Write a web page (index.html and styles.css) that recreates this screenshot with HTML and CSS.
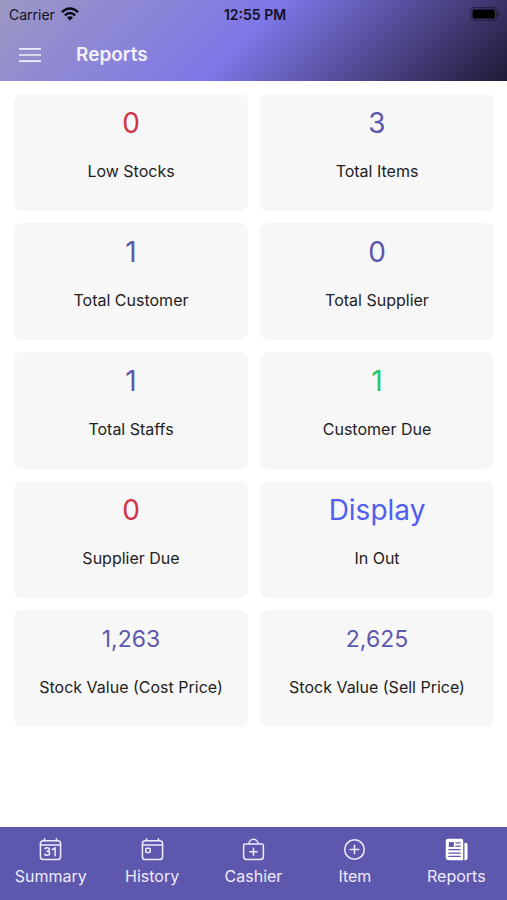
FILE: index.html
```
<!DOCTYPE html>
<html lang="en">
<head>
<meta charset="utf-8">
<meta name="viewport" content="width=device-width, initial-scale=1">
<title>Reports</title>
<link rel="stylesheet" href="styles.css">
</head>
<body>
<header class="header">
  <div class="status">
    <div class="carrier">
      <span>Carrier</span>
      <svg width="18" height="14" viewBox="0 0 18 14" fill="none" stroke="#0b0a18" stroke-width="2.4" aria-hidden="true">
        <path d="M.9 5.1Q9-2.1 17.1 5.1"/>
        <path d="M3.8 8.3Q9 3.8 14.2 8.3"/>
        <path d="M9 13.6 5.9 10.5Q9 8 12.1 10.5Z" fill="#0b0a18" stroke="none"/>
      </svg>
    </div>
    <time class="clock">12:55 PM</time>
    <svg class="battery" width="31" height="14" viewBox="0 0 31 14" aria-hidden="true">
      <rect x=".7" y=".7" width="26" height="12.6" rx="3.6" fill="none" stroke="#080612" stroke-opacity=".4" stroke-width="1.2"/>
      <rect x="2.5" y="2.5" width="22.5" height="9" rx="2" fill="#000"/>
      <path d="M28.3 4.7q2 .7 2 2.3t-2 2.3z" fill="#080612" fill-opacity=".45"/>
    </svg>
  </div>
  <div class="toolbar">
    <button class="menu" type="button" aria-label="Menu">
      <svg width="22" height="16" viewBox="0 0 22 16" stroke="#f1effc" stroke-width="1.7" aria-hidden="true"><path d="M0 1.8h22M0 8h22M0 14.2h22"/></svg>
    </button>
    <h1 class="title">Reports</h1>
  </div>
</header>
<main class="cards">
  <section class="card"><p class="value red">0</p><h2 class="label">Low Stocks</h2></section>
  <section class="card"><p class="value">3</p><h2 class="label">Total Items</h2></section>
  <section class="card"><p class="value">1</p><h2 class="label">Total Customer</h2></section>
  <section class="card"><p class="value">0</p><h2 class="label">Total Supplier</h2></section>
  <section class="card"><p class="value">1</p><h2 class="label">Total Staffs</h2></section>
  <section class="card"><p class="value green">1</p><h2 class="label">Customer Due</h2></section>
  <section class="card"><p class="value red">0</p><h2 class="label">Supplier Due</h2></section>
  <section class="card"><p class="value blue">Display</p><h2 class="label">In Out</h2></section>
  <section class="card"><p class="value small">1,263</p><h2 class="label">Stock Value (Cost Price)</h2></section>
  <section class="card"><p class="value small">2,625</p><h2 class="label">Stock Value (Sell Price)</h2></section>
</main>
<nav class="tabs">
  <a class="tab" href="#summary">
    <svg class="icon" viewBox="0 0 24 24" aria-hidden="true"><rect x="1.5" y="2.8" width="21" height="19.7" rx="3"/><path d="M1.5 7.4h21M5.8.8v2M18.2.8v2"/><path d="M6.3 11.2q.6-1 2.2-1 2.3 0 2.3 1.9 0 1.8-2.5 1.8 2.8 0 2.8 2.1 0 2.1-2.6 2.1-2 0-2.5-1.3M14 12l2.8-1.8v8.2"/></svg>
    <span>Summary</span>
  </a>
  <a class="tab" href="#history">
    <svg class="icon" viewBox="0 0 24 24" aria-hidden="true"><rect x="1.5" y="2.8" width="21" height="19.7" rx="3"/><path d="M1.5 7.4h21M5.8.8v2M18.2.8v2"/><rect x="5" y="10.6" width="4.6" height="4.6" rx="1"/></svg>
    <span>History</span>
  </a>
  <a class="tab" href="#cashier">
    <svg class="icon" viewBox="0 0 24 24" aria-hidden="true"><path d="M3.5 6.2h17q1.8 0 1.8 1.8v11.3q0 3.2-3.2 3.2H4.9q-3.2 0-3.2-3.2V8q0-1.8 1.8-1.8zM7.2 6.2a4.8 4.8 0 0 1 9.6 0M12 10.7v7.4M8.3 14.4h7.4"/></svg>
    <span>Cashier</span>
  </a>
  <a class="tab" href="#item">
    <svg class="icon" viewBox="0 0 24 24" aria-hidden="true"><circle cx="12" cy="12" r="10.2"/><path d="M12 7.5v9M7.5 12h9"/></svg>
    <span>Item</span>
  </a>
  <a class="tab" href="#reports" aria-current="page">
    <svg class="icon" viewBox="0 0 24 24" aria-hidden="true"><path d="M3 .8h14q2 0 2 2v20.4H4Q.8 23.2.8 20V3Q.8.8 3 .8z" fill="#fff" stroke="none"/><path d="M20.3 5h1.2q2 0 2 2v13.5q0 2.7-3.2 2.7z" fill="#fff" stroke="none"/><path d="M4 4.3h5.3v5H4z" fill="#5e57ae" stroke="none"/><path d="M11.3 5h4.5M11.3 8.6h4.5M4 12.2h11.8M4 15.7h11.8M4 19.2h11.8" stroke="#5e57ae" stroke-width="1.3"/></svg>
    <span>Reports</span>
  </a>
</nav>
</body>
</html>
```
FILE: styles.css
```
* {
  box-sizing: border-box;
}

body {
  display: flex;
  flex-direction: column;
  min-height: 100vh;
  margin: 0;
  background: #fff;
  color: #222;
  font-family: Inter, "Liberation Sans", sans-serif;
}

.header {
  background: linear-gradient(135deg, #9c98c2 0%, #7e77e8 48%, #211936 100%);
}

.status {
  display: grid;
  grid-template-columns: 1fr auto 1fr;
  align-items: center;
  height: 28px;
  padding: 0 6px 0 9px;
  color: #12101f;
  font-size: 14px;
}

.carrier {
  display: flex;
  align-items: center;
  gap: 6px;
}

.clock {
  font-weight: 600;
}

.battery {
  justify-self: end;
}

.toolbar {
  display: flex;
  align-items: center;
  gap: 35px;
  height: 53px;
  padding: 0 19px;
}

.menu {
  display: flex;
  padding: 0;
  border: 0;
  background: none;
}

.title {
  margin: 0;
  color: #f3f1fd;
  font-size: 19px;
  font-weight: 600;
}

.cards {
  display: grid;
  grid-template-columns: 1fr 1fr;
  gap: 12px;
  padding: 13px 13px 24px 14px;
}

.card {
  padding: 11px 8px 30px;
  border-radius: 8px;
  background: #f7f7f7;
  text-align: center;
}

.value {
  margin: 0 0 20px;
  color: #5e57ae;
  font-size: 28px;
  line-height: 36px;
}

.value.small {
  font-size: 23px;
}

.red {
  color: #cf3549;
}

.green {
  color: #2ac36b;
}

.blue {
  color: #505ff0;
}

.label {
  margin: 0;
  font-size: 16px;
  font-weight: 400;
  line-height: 20px;
}

.tabs {
  display: grid;
  grid-template-columns: repeat(5, 1fr);
  margin-top: auto;
  padding: 11px 0 13px;
  background: #5e57ae;
}

.tab {
  display: flex;
  flex-direction: column;
  align-items: center;
  gap: 5px;
  color: #eeebfd;
  font-size: 16px;
  line-height: 21px;
  text-decoration: none;
}

.icon {
  width: 23px;
  height: 23px;
  fill: none;
  stroke: #eeebfd;
  stroke-width: 1.6;
  stroke-linecap: round;
  stroke-linejoin: round;
}
```
